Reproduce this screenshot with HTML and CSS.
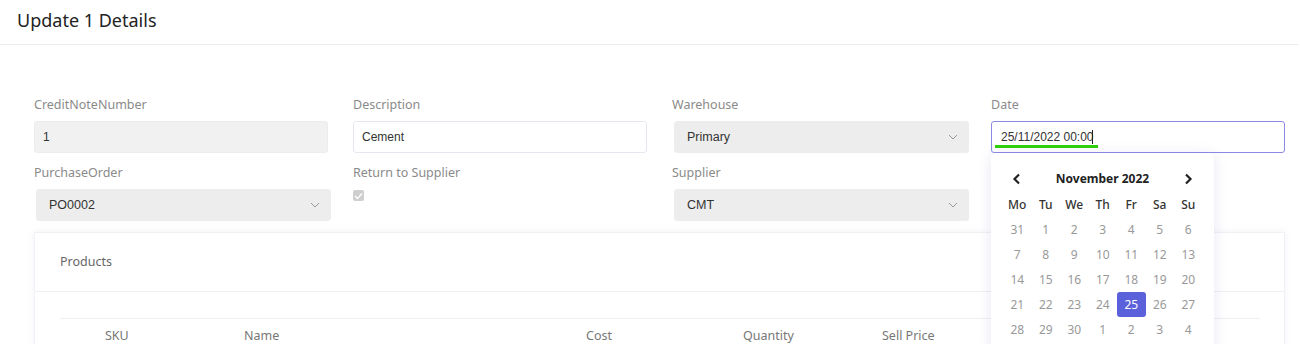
FILE: index.html
```html
<!DOCTYPE html>
<html lang="en">
<head>
    <meta charset="UTF-8">
    <meta name="viewport" content="width=device-width, initial-scale=1.0">
    <title>Update 1 Details</title>
    <link rel="stylesheet" href="styles.css">
</head>
<body>
  <div class="page-head">
    <h2>Update 1 Details</h2>
  </div>
  <div class="content">
    <form class="grid">
      <div class="field">
        <label>CreditNoteNumber</label>
        <input type="text" class="ctrl ctrl-off" value="1" disabled />
      </div>
      <div class="field">
        <label>Description</label>
        <input type="text" class="ctrl" value="Cement" />
      </div>
      <div class="field">
        <label>Warehouse</label>
        <div class="sel">
          <select class="ctrl ctrl-sel"><option>Primary</option></select>
          <svg class="chev" width="10" height="6" viewBox="0 0 10 6"><path d="M1 1l4 4 4-4" fill="none" stroke="#999" stroke-width="1"/></svg>
        </div>
      </div>
      <div class="field date-field">
        <label>Date</label>
        <div class="ctrl ctrl-date"><span class="mark">25/11/2022 00:00</span><span class="caret"></span></div>
        <div class="picker">
          <div class="picker-head">
            <svg width="10" height="12" viewBox="0 0 10 12"><path d="M7 1.5L2.5 6 7 10.5" fill="none" stroke="#222" stroke-width="2.2"/></svg>
            <span>November 2022</span>
            <svg width="10" height="12" viewBox="0 0 10 12"><path d="M3 1.5L7.5 6 3 10.5" fill="none" stroke="#222" stroke-width="2.2"/></svg>
          </div>
          <div class="days">
            <b>Mo</b><b>Tu</b><b>We</b><b>Th</b><b>Fr</b><b>Sa</b><b>Su</b>
            <i>31</i><i>1</i><i>2</i><i>3</i><i>4</i><i>5</i><i>6</i>
            <i>7</i><i>8</i><i>9</i><i>10</i><i>11</i><i>12</i><i>13</i>
            <i>14</i><i>15</i><i>16</i><i>17</i><i>18</i><i>19</i><i>20</i>
            <i>21</i><i>22</i><i>23</i><i>24</i><i class="on">25</i><i>26</i><i>27</i>
            <i>28</i><i>29</i><i>30</i><i>1</i><i>2</i><i>3</i><i>4</i>
          </div>
        </div>
      </div>
      <div class="field">
        <label>PurchaseOrder</label>
        <div class="sel">
          <select class="ctrl ctrl-sel"><option>PO0002</option></select>
          <svg class="chev" width="10" height="6" viewBox="0 0 10 6"><path d="M1 1l4 4 4-4" fill="none" stroke="#999" stroke-width="1"/></svg>
        </div>
      </div>
      <div class="field">
        <label>Return to Supplier</label>
        <span class="check">
          <svg width="9" height="8" viewBox="0 0 9 8"><path d="M1 4l2.5 2.5L8 1.5" fill="none" stroke="#fff" stroke-width="1.3"/></svg>
        </span>
      </div>
      <div class="field">
        <label>Supplier</label>
        <div class="sel">
          <select class="ctrl ctrl-sel"><option>CMT</option></select>
          <svg class="chev" width="10" height="6" viewBox="0 0 10 6"><path d="M1 1l4 4 4-4" fill="none" stroke="#999" stroke-width="1"/></svg>
        </div>
      </div>
    </form>

    <div class="card">
      <div class="card-head">Products</div>
      <div class="card-body">
        <table>
          <thead>
            <tr>
              <th class="c-sku">SKU</th>
              <th class="c-name">Name</th>
              <th class="c-cost">Cost</th>
              <th class="c-qty">Quantity</th>
              <th class="c-sell">Sell Price</th>
              <th></th>
            </tr>
          </thead>
        </table>
      </div>
    </div>
  </div>
</body>
</html>
```

FILE: styles.css
```css
* {
  margin: 0;
  padding: 0;
  box-sizing: border-box;
}
body {
  font-family: "Noto Sans", "Open Sans", sans-serif;
  color: #333;
  background: #fff;
  overflow: hidden;
}
.page-head {
  height: 45px;
  padding: 9px 17px 0;
  border-bottom: 1px solid #ebebeb;
  margin-right: 2px;
}
.page-head h2 {
  font-size: 18px;
  font-weight: 400;
  color: #222;
  line-height: 22px;
}
.content {
  padding: 52px 15px 0 34px;
}
.grid {
  display: grid;
  grid-template-columns: repeat(4, 294px);
  column-gap: 25px;
  row-gap: 12px;
}
.field label {
  display: block;
  font-size: 12.5px;
  color: #8a8a8a;
  line-height: 16px;
  height: 24px;
}
.ctrl {
  display: block;
  width: 294px;
  height: 32px;
  border: 1px solid #e6e6ee;
  border-radius: 3px;
  background: #fff;
  padding: 0 8px;
  font-family: "Liberation Sans", Arial, sans-serif;
  font-size: 12px;
  color: #333;
  outline: none;
}
.ctrl-off {
  background: #f1f1f1;
  border-color: #ececec;
}
.sel {
  position: relative;
  width: 295px;
  margin-left: 2px;
}
.ctrl-sel {
  appearance: none;
  -webkit-appearance: none;
  width: 295px;
  background: #ededed;
  border-color: #ededed;
  padding: 0 12px;
  font-size: 12.5px;
}
.chev {
  position: absolute;
  right: 11px;
  top: 13px;
}
.date-field {
  position: relative;
}
.ctrl-date {
  border-color: #8d89e3;
  display: flex;
  align-items: center;
  padding-left: 3px;
}
.mark {
  padding: 0 4px 0 6px;
  line-height: 15px;
  border-bottom: 3px solid #2ed10a;
  margin-top: 3px;
}
.caret {
  width: 1px;
  height: 14px;
  background: #222;
  margin-left: -6px;
  margin-top: -1px;
}
.picker {
  position: absolute;
  top: 56px;
  left: 0;
  width: 223px;
  height: 200px;
  background: #fff;
  border-radius: 5px;
  box-shadow: 0 2px 14px rgba(120, 120, 190, 0.18);
  padding: 17px 12px 0;
  z-index: 2;
  font-family: "Noto Sans", "Open Sans", sans-serif;
}
.picker-head {
  display: flex;
  align-items: center;
  justify-content: space-between;
  padding: 0 9px 0 9px;
  height: 17px;
  font-size: 12px;
  font-weight: 700;
  color: #222;
}
.days {
  display: grid;
  grid-template-columns: repeat(7, 28.5px);
  grid-auto-rows: 25px;
  margin-top: 5px;
}
.days b,
.days i {
  font-style: normal;
  font-size: 12px;
  display: flex;
  align-items: center;
  justify-content: center;
}
.days b {
  font-weight: 500;
  color: #333;
}
.days i {
  color: #999;
}
.days i.on {
  background: #5b61da;
  color: #fff;
  border-radius: 3px;
}
.check {
  display: flex;
  align-items: center;
  justify-content: center;
  width: 11px;
  height: 11px;
  margin-top: 1px;
  background: #cfcfcf;
  border-radius: 2px;
}
.card {
  margin-top: 11px;
  width: 1251px;
  height: 200px;
  border: 1px solid #f1f1f6;
  box-shadow: 0 0 6px rgba(200, 200, 225, 0.25);
  background: #fff;
}
.card-head {
  height: 59px;
  padding: 20px 25px 0;
  font-size: 12.5px;
  color: #666;
  border-bottom: 1px solid #eef0f4;
}
.card-body {
  padding: 26px 0 0 25px;
}
table {
  width: 1200px;
  border-collapse: collapse;
  border-top: 1px solid #eef0f4;
}
th {
  font-size: 12.5px;
  font-weight: 400;
  color: #777;
  text-align: left;
  height: 34px;
}
.c-sku { width: 184px; padding-left: 45px; }
.c-name { width: 342px; }
.c-cost { width: 157px; }
.c-qty { width: 139px; }
.c-sell { width: 150px; }
```
